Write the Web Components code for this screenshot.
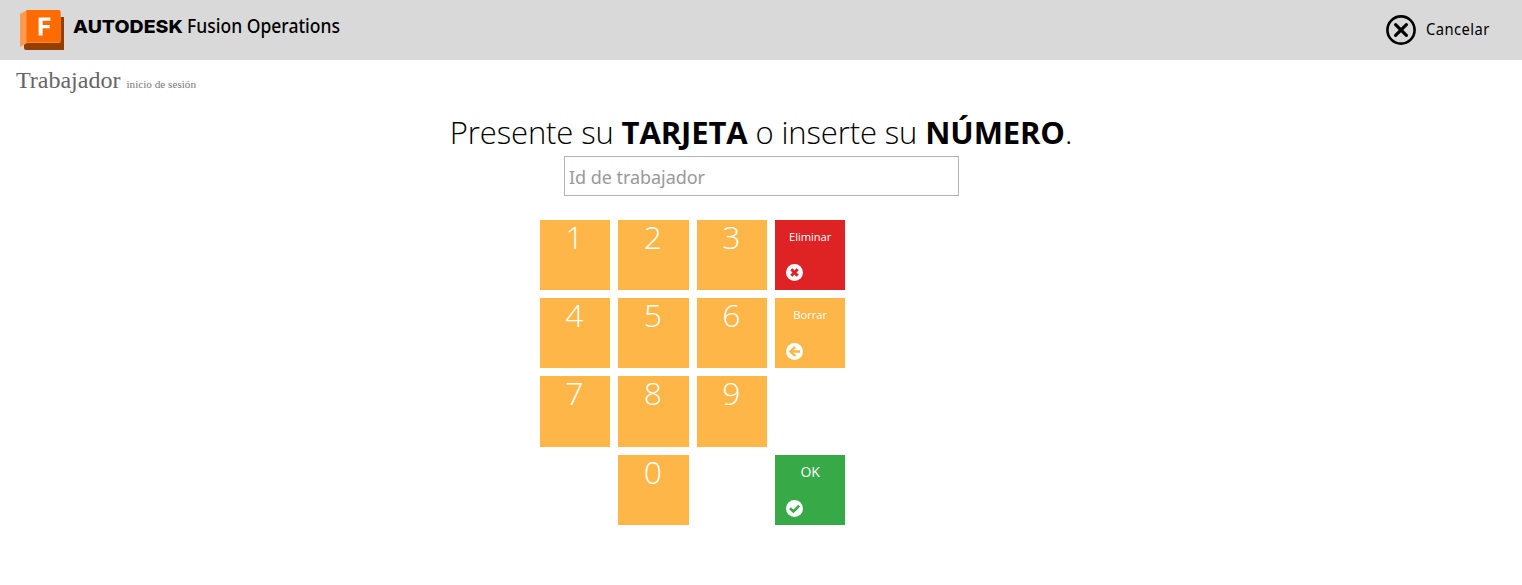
<!DOCTYPE html>
<html lang="es">
<head>
<meta charset="utf-8">
<title>Fusion Operations</title>
<style>
html,body{margin:0;padding:0;background:#fff;overflow:hidden}
</style>
</head>
<body>
<worker-login></worker-login>
<script>
const define = (name, html) => customElements.define(name, class extends HTMLElement {
  constructor() {
    super();
    const t = document.createElement('template');
    t.innerHTML = html;
    this.attachShadow({mode: 'open'}).append(t.content.cloneNode(true));
  }
});

define('fusion-logo', `
<style>:host{display:block;width:46px;height:42px}svg{display:block}</style>
<svg width="46" height="42" viewBox="0 0 46 42">
  <path d="M1 5L8 1V34L1 38Z" fill="#ff9a4f"/>
  <path d="M5 35.8L8 34H40L41.5 32V8H45V41H7Q5 41 5 39Z" fill="#943e00"/>
  <path d="M7.5 1H39.5Q41.7 1 41.7 3V33.7H7.5Z" fill="#ff6b00"/>
  <path d="M19.6 8.5H31.4V11.8H23.6V16H30.7V19.3H23.6V26.6H19.6Z" fill="#fff"/>
</svg>`);

define('cancel-button', `
<style>
:host{display:flex;align-items:center;gap:10px;font:16px/22px "Noto Sans",sans-serif;color:#000}
svg{display:block}
span{display:block;width:67px;height:24px;letter-spacing:.5px;white-space:nowrap;transform:scaleX(.92);transform-origin:0 50%}
</style>
<svg width="30" height="30" viewBox="0 0 30 30" fill="none" stroke="#000">
  <circle cx="15" cy="15" r="13.6" stroke-width="2.6"/>
  <path d="M9.6 9.6L20.4 20.4M20.4 9.6L9.6 20.4" stroke-width="3.2" stroke-linecap="round"/>
</svg>
<span><slot></slot></span>`);

define('app-header', `
<style>
:host{display:flex;height:60px;background:#d9d9d9;box-sizing:border-box;padding:9px 29px 0 19px;color:#000}
.brand{display:flex;align-items:center;height:36px;margin-left:8px;font-size:19px;line-height:24px;white-space:nowrap}
.name{display:block;width:114px}
.name b{display:inline-block;font:800 18px/24px Inter,sans-serif;transform:scaleX(1.085);transform-origin:0 50%}
.product{height:26px;font:500 19.4px/24px "Noto Sans",sans-serif}
.product span{display:inline-block;transform:scaleX(.903);transform-origin:0 50%}
cancel-button{margin-left:auto;height:42px}
</style>
<fusion-logo></fusion-logo>
<div class="brand"><span class="name"><b>AUTODESK</b></span><span class="product"><span>Fusion Operations</span></span></div>
<cancel-button>Cancelar</cancel-button>`);

define('page-title', `
<style>
:host{display:block;height:42px;padding-left:16px;box-sizing:border-box;font:24px/40px "Liberation Serif",serif;color:#666}
small{font-size:11.2px;color:#777}
</style>
Trabajador <small>inicio de sesión</small>`);

define('login-prompt', `
<style>
:host{display:flex;flex-direction:column;align-items:center;font-family:"Open Sans",sans-serif}
p{box-sizing:border-box;margin:0;padding-top:8px;height:54px;font-size:31px;font-weight:300;line-height:44px;letter-spacing:-.12px;color:#000;white-space:nowrap}
b{font-weight:700}
input{display:block;box-sizing:border-box;width:395px;height:40px;border:1px solid #b3b3b3;padding:2px 5px 0 4px;margin:0 0 0 1px;font:18px "Noto Sans",sans-serif;letter-spacing:-.05px;background:#fff;outline:0}
input::placeholder{color:#999;opacity:1}
</style>
<p>Presente su <b>TARJETA</b> o inserte su <b>NÚMERO</b>.</p>
<input placeholder="Id de trabajador">`);

define('digit-key', `
<style>
:host{display:block;box-sizing:border-box;padding-right:1px;background:#ffb648;color:#fff;text-align:center;font:300 32px/33px "Open Sans",sans-serif}
</style><slot></slot>`);

define('action-key', `
<style>
:host{display:block;position:relative;box-sizing:border-box;padding-top:8px;background:#ffb648;color:#fff;text-align:center;font:11.2px/17px "Open Sans",sans-serif;letter-spacing:-.05px}
:host([kind=clear]){background:#df2224}
:host([kind=back]){line-height:18px}
:host([kind=ok]){background:#37a947;font-size:14px;line-height:18px}
.icon{position:absolute;left:10.6px;bottom:8.6px;width:17px;height:17px}
svg{display:none;width:17px;height:17px}
path{fill:none;stroke:var(--c);stroke-width:2.6}
:host([kind=clear]) .clear,:host([kind=back]) .back,:host([kind=ok]) .ok{display:block}
.clear{--c:#df2224}.back{--c:#ffb648}.ok{--c:#37a947}
</style>
<slot></slot>
<div class="icon">
<svg class="clear" viewBox="0 0 17 17"><circle cx="8.5" cy="8.5" r="8.5" fill="#fff"/><path d="M5.3 5.3L11.7 11.7M11.7 5.3L5.3 11.7" style="stroke-width:3"/></svg>
<svg class="back" viewBox="0 0 17 17"><circle cx="8.5" cy="8.5" r="8.5" fill="#fff"/><path d="M9.2 3.8L4.5 8.5L9.2 13.2M4.6 8.5H14" style="stroke-width:2.4"/></svg>
<svg class="ok" viewBox="0 0 17 17"><circle cx="8.5" cy="8.5" r="8.5" fill="#fff"/><path d="M4 8.2L7.4 11.5L13.2 5.7"/></svg>
</div>`);

define('key-pad', `
<style>
:host{display:grid;grid-template-columns:repeat(4,70.4px);grid-auto-rows:70.4px;gap:8px;width:max-content}
.zero{grid-column:2}
.last{grid-column:4}
</style>
<digit-key>1</digit-key><digit-key>2</digit-key><digit-key>3</digit-key><action-key kind="clear">Eliminar</action-key>
<digit-key>4</digit-key><digit-key>5</digit-key><digit-key>6</digit-key><action-key kind="back">Borrar</action-key>
<digit-key>7</digit-key><digit-key>8</digit-key><digit-key>9</digit-key>
<digit-key class="zero">0</digit-key><action-key kind="ok" class="last">OK</action-key>`);

define('worker-login', `
<style>
:host{display:block;height:585px;overflow:hidden;background:#fff}
key-pad{margin:23.7px 0 0 539.8px}
</style>
<app-header></app-header>
<page-title></page-title>
<login-prompt></login-prompt>
<key-pad></key-pad>`);
</script>
</body>
</html>
